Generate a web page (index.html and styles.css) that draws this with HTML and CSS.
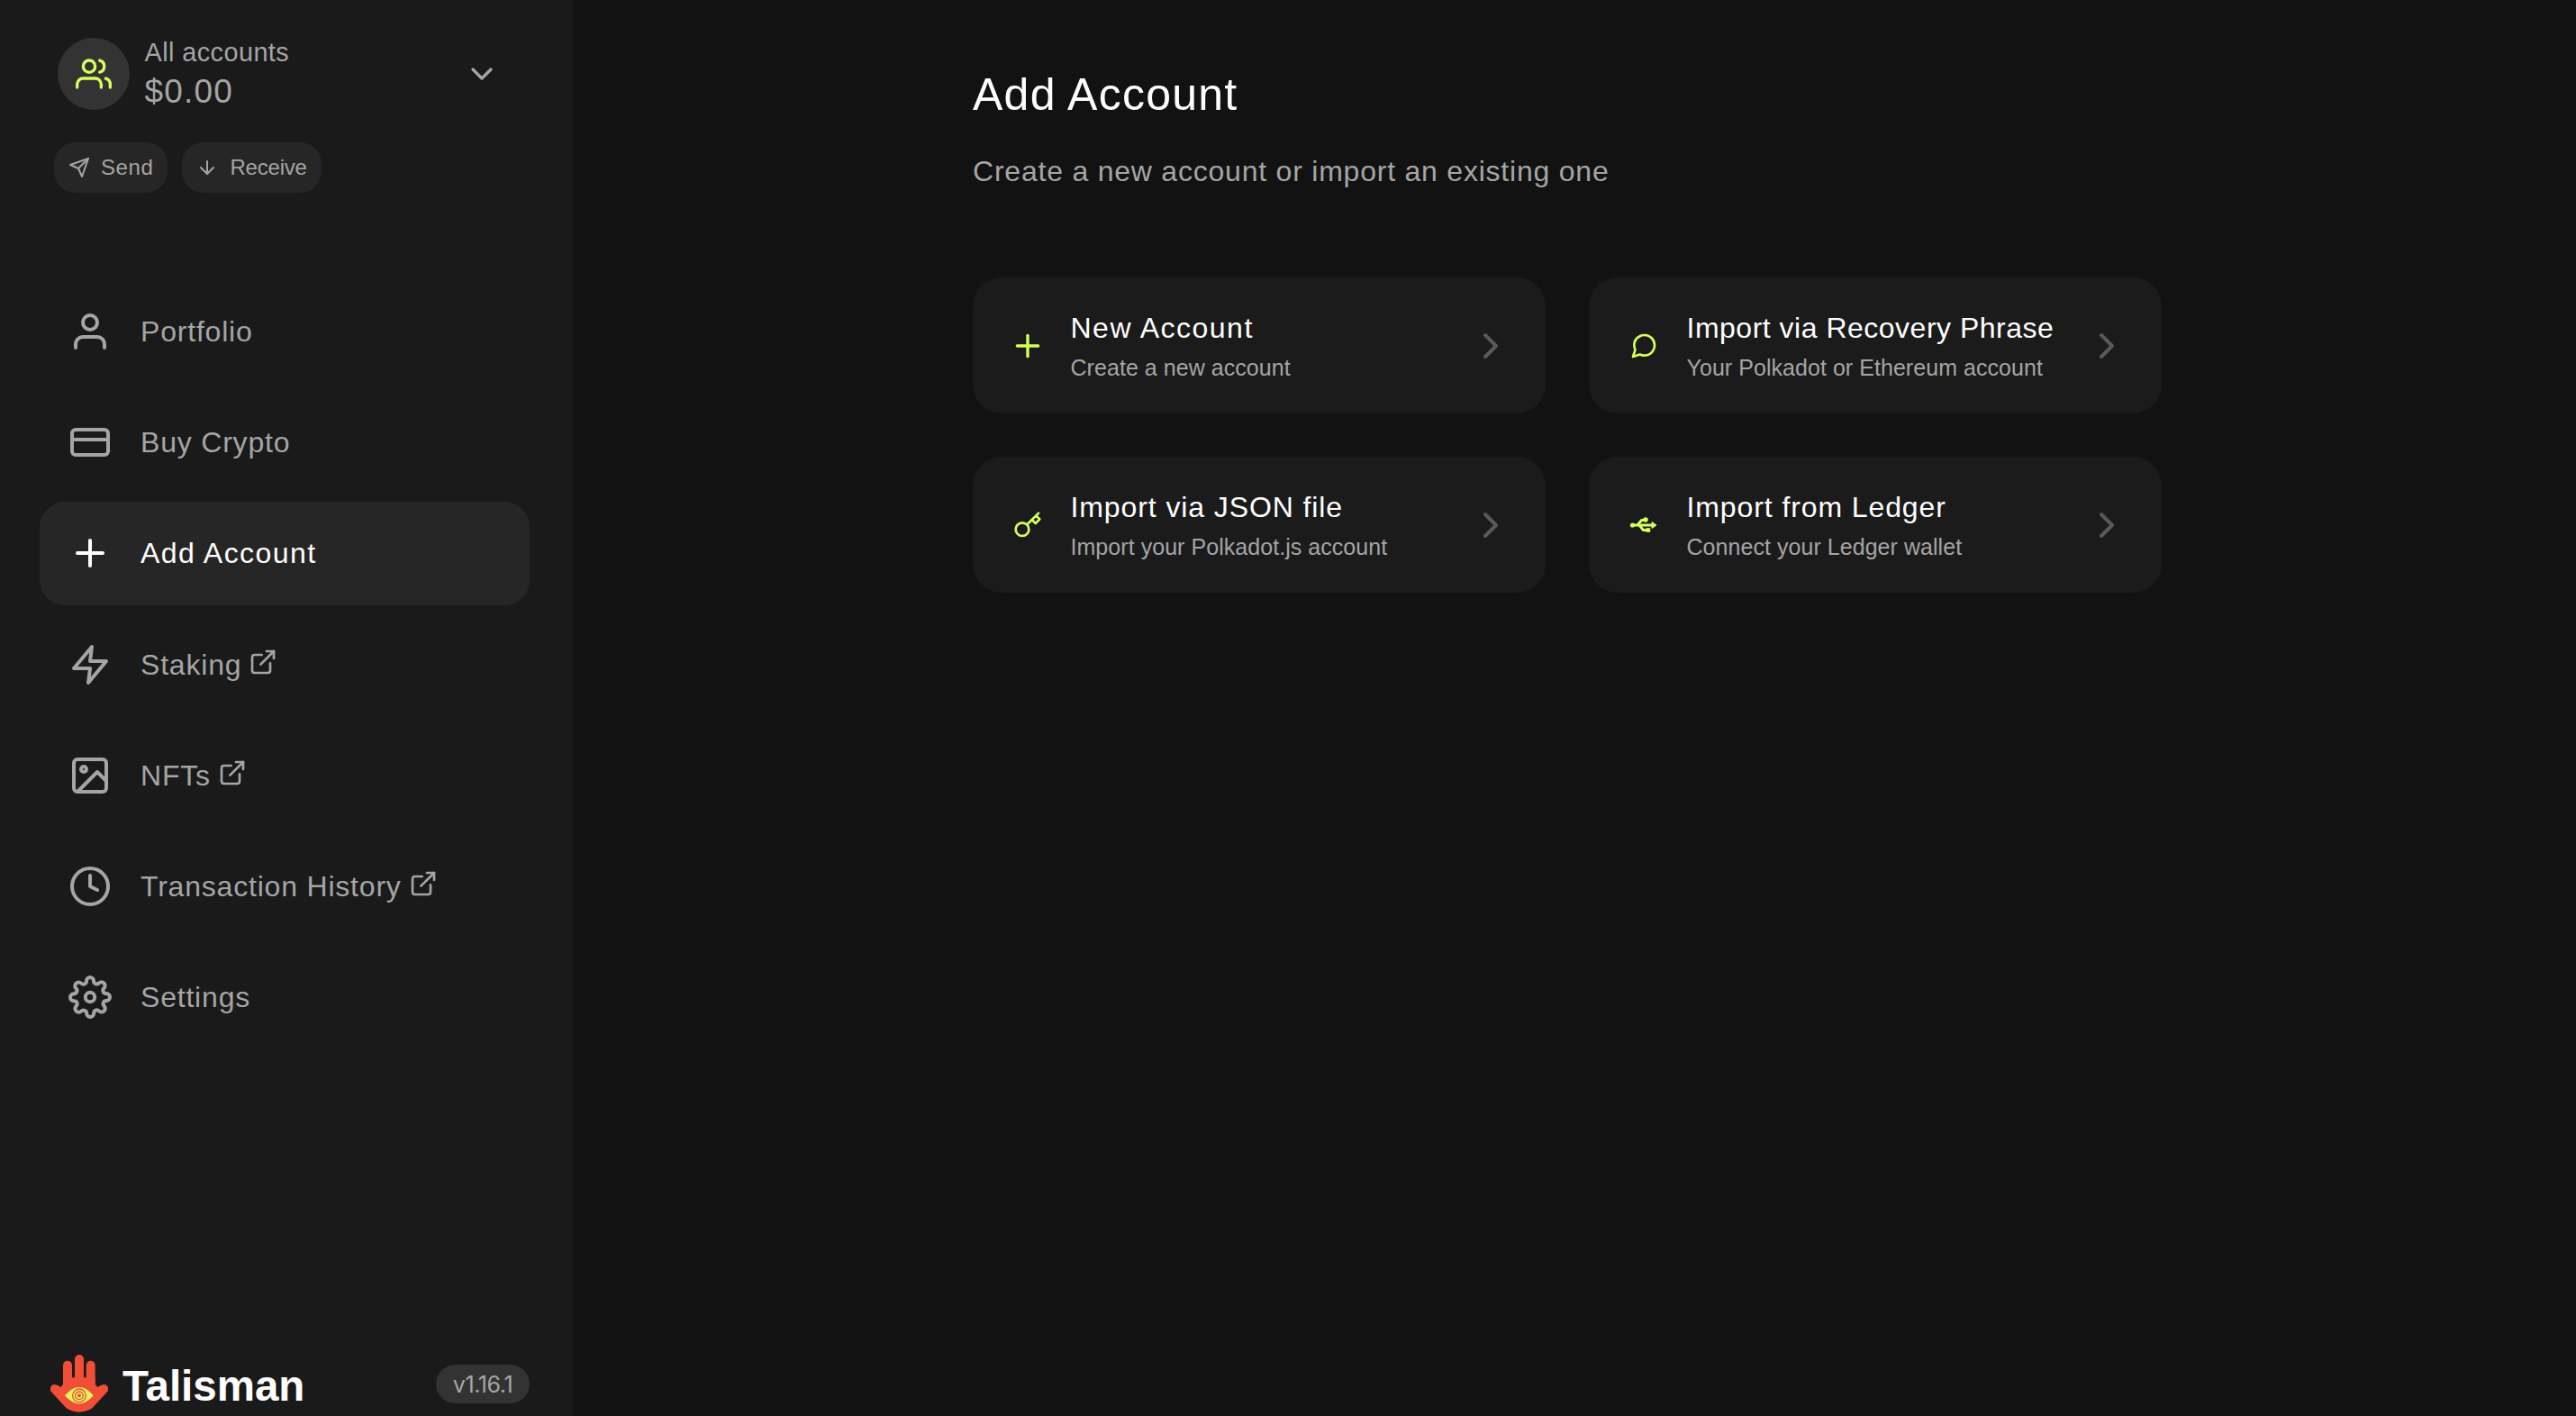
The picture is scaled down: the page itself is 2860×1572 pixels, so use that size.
FILE: index.html
```html
<!DOCTYPE html>
<html lang="en">
<head>
<meta charset="utf-8">
<title>Add Account</title>
<link rel="stylesheet" href="styles.css">
</head>
<body>
<div class="app">
  <aside class="sidebar">
    <div class="account-block">
      <div class="account-row">
        <div class="avatar"><svg class="ico i40" viewBox="0 0 24 24"><path d="M17 21v-2a4 4 0 0 0-4-4H5a4 4 0 0 0-4 4v2"/><circle cx="9" cy="7" r="4"/><path d="M23 21v-2a4 4 0 0 0-3-3.87"/><path d="M16 3.13a4 4 0 0 1 0 7.75"/></svg></div>
        <div class="account-text">
          <div class="account-name">All accounts</div>
          <div class="account-total">$0.00</div>
        </div>
        <svg class="ico i40 account-chevron" viewBox="0 0 24 24"><polyline points="6 9 12 15 18 9"/></svg>
      </div>
      <div class="quick-actions">
        <div class="pill pill-send"><svg class="ico i24" viewBox="0 0 24 24"><line x1="22" y1="2" x2="11" y2="13"/><polygon points="22 2 15 22 11 13 2 9 22 2"/></svg><span>Send</span></div>
        <div class="pill pill-receive"><svg class="ico i24" viewBox="0 0 24 24"><line x1="12" y1="5" x2="12" y2="19"/><polyline points="19 12 12 19 5 12"/></svg><span>Receive</span></div>
      </div>
    </div>
    <nav class="nav">
      <div class="nav-item"><svg class="ico i48" viewBox="0 0 24 24"><path d="M20 21v-2a4 4 0 0 0-4-4H8a4 4 0 0 0-4 4v2"/><circle cx="12" cy="7" r="4"/></svg><span>Portfolio</span></div>
      <div class="nav-item"><svg class="ico i48" viewBox="0 0 24 24"><rect x="2" y="5" width="20" height="14" rx="2"/><line x1="2" y1="10.5" x2="22" y2="10.5"/></svg><span>Buy Crypto</span></div>
      <div class="nav-item active"><svg class="ico i48" viewBox="0 0 24 24"><line x1="12" y1="5" x2="12" y2="19"/><line x1="5" y1="12" x2="19" y2="12"/></svg><span>Add Account</span></div>
      <div class="nav-item"><svg class="ico i48" viewBox="0 0 24 24"><polygon points="13 2 3 14 12 14 11 22 21 10 12 10 13 2"/></svg><span>Staking</span><svg class="ico i32 ext" viewBox="0 0 24 24"><path d="M18 13v6a2 2 0 0 1-2 2H5a2 2 0 0 1-2-2V8a2 2 0 0 1 2-2h6"/><polyline points="15 3 21 3 21 9"/><line x1="10" y1="14" x2="21" y2="3"/></svg></div>
      <div class="nav-item"><svg class="ico i48" viewBox="0 0 24 24"><rect x="3" y="3" width="18" height="18" rx="2"/><circle cx="8.5" cy="8.5" r="1.5"/><polyline points="21 15 16 10 5 21"/></svg><span>NFTs</span><svg class="ico i32 ext" viewBox="0 0 24 24"><path d="M18 13v6a2 2 0 0 1-2 2H5a2 2 0 0 1-2-2V8a2 2 0 0 1 2-2h6"/><polyline points="15 3 21 3 21 9"/><line x1="10" y1="14" x2="21" y2="3"/></svg></div>
      <div class="nav-item"><svg class="ico i48" viewBox="0 0 24 24"><circle cx="12" cy="12" r="10"/><polyline points="12 6 12 12 16 14"/></svg><span>Transaction History</span><svg class="ico i32 ext" viewBox="0 0 24 24"><path d="M18 13v6a2 2 0 0 1-2 2H5a2 2 0 0 1-2-2V8a2 2 0 0 1 2-2h6"/><polyline points="15 3 21 3 21 9"/><line x1="10" y1="14" x2="21" y2="3"/></svg></div>
      <div class="nav-item"><svg class="ico i48" viewBox="0 0 24 24"><circle cx="12" cy="12" r="2.6"/><path d="M19.4 15a1.65 1.65 0 0 0 .33 1.82l.06.06a2 2 0 0 1 0 2.83 2 2 0 0 1-2.83 0l-.06-.06a1.65 1.65 0 0 0-1.82-.33 1.65 1.65 0 0 0-1 1.51V21a2 2 0 0 1-2 2 2 2 0 0 1-2-2v-.09A1.65 1.65 0 0 0 9 19.4a1.65 1.65 0 0 0-1.82.33l-.06.06a2 2 0 0 1-2.83 0 2 2 0 0 1 0-2.83l.06-.06a1.65 1.65 0 0 0 .33-1.82 1.65 1.65 0 0 0-1.51-1H3a2 2 0 0 1-2-2 2 2 0 0 1 2-2h.09A1.65 1.65 0 0 0 4.6 9a1.65 1.65 0 0 0-.33-1.82l-.06-.06a2 2 0 0 1 0-2.83 2 2 0 0 1 2.83 0l.06.06a1.65 1.65 0 0 0 1.82.33H9a1.65 1.65 0 0 0 1-1.51V3a2 2 0 0 1 2-2 2 2 0 0 1 2 2v.09a1.65 1.65 0 0 0 1 1.51 1.65 1.65 0 0 0 1.82-.33l.06-.06a2 2 0 0 1 2.83 0 2 2 0 0 1 0 2.83l-.06.06a1.65 1.65 0 0 0-.33 1.82V9a1.65 1.65 0 0 0 1.51 1H21a2 2 0 0 1 2 2 2 2 0 0 1-2 2h-.09a1.65 1.65 0 0 0-1.51 1z"/></svg><span>Settings</span></div>
    </nav>
    <footer class="brand-row">
      <div class="brand">
        <svg class="hand" viewBox="48 42 192 192">
          <g class="hand-fingers"><line x1="105" y1="77" x2="105" y2="150"/><line x1="144" y1="57" x2="144" y2="150"/><line x1="182" y1="77" x2="182" y2="150"/></g>
          <path class="hand-palm" d="M90 118 L197 118 L197 140 L205 150 Q215 142 226 141 A15 15 0 0 1 237 166 L187 220 Q166 233 144 233 Q122 233 101 220 L51 166 A15 15 0 0 1 62 141 Q73 142 83 150 L90 140 Z"/>
          <path class="hand-eye" d="M96 178 Q120 150 144 150 Q168 150 191 178 Q168 205 144 205 Q120 205 96 178 Z"/>
          <circle class="hand-ring" cx="144" cy="178" r="22"/>
          <circle class="hand-ring" cx="144" cy="178" r="13"/>
          <circle class="hand-dot" cx="144" cy="178" r="6"/>
        </svg>
        <span class="brand-name">Talisman</span>
      </div>
      <span class="version">v1.16.1</span>
    </footer>
  </aside>
  <main class="main">
    <h1 class="title">Add Account</h1>
    <p class="subtitle">Create a new account or import an existing one</p>
    <div class="cards">
      <div class="card">
        <div class="card-icon"><svg class="ico i40" viewBox="0 0 24 24"><line x1="12" y1="5" x2="12" y2="19"/><line x1="5" y1="12" x2="19" y2="12"/></svg></div>
        <div class="card-text"><div class="card-title wide">New Account</div><div class="card-sub">Create a new account</div></div>
        <svg class="ico i48 card-arrow" viewBox="0 0 24 24"><polyline points="9 18 15 12 9 6"/></svg>
      </div>
      <div class="card">
        <div class="card-icon"><svg class="ico i32" viewBox="0 0 24 24"><path d="M21 11.5a8.38 8.38 0 0 1-.9 3.8 8.5 8.5 0 0 1-7.6 4.7 8.38 8.38 0 0 1-3.8-.9L3 21l1.9-5.7a8.38 8.38 0 0 1-.9-3.8 8.5 8.5 0 0 1 4.7-7.6 8.38 8.38 0 0 1 3.8-.9h.5a8.48 8.48 0 0 1 8 8v.5z"/></svg></div>
        <div class="card-text"><div class="card-title tight">Import via Recovery Phrase</div><div class="card-sub">Your Polkadot or Ethereum account</div></div>
        <svg class="ico i48 card-arrow" viewBox="0 0 24 24"><polyline points="9 18 15 12 9 6"/></svg>
      </div>
      <div class="card">
        <div class="card-icon"><svg class="ico i32" viewBox="0 0 24 24"><path d="M21 2l-2 2m-7.61 7.61a5.5 5.5 0 1 1-7.78 7.78 5.5 5.5 0 0 1 7.78-7.78zm0 0L15.5 7.5m0 0l3 3L22 7l-3-3m-3.5 3.5L19 4"/></svg></div>
        <div class="card-text"><div class="card-title">Import via JSON file</div><div class="card-sub">Import your Polkadot.js account</div></div>
        <svg class="ico i48 card-arrow" viewBox="0 0 24 24"><polyline points="9 18 15 12 9 6"/></svg>
      </div>
      <div class="card">
        <div class="card-icon"><svg class="usb" viewBox="0 0 32 32"><path d="M3 16H28"/><path d="M25 12.5L30 16L25 19.5Z"/><path d="M9 16L13.5 10.5H18"/><path d="M11 16L15.5 21.5H20"/><circle cx="3.5" cy="16" r="2.6"/><circle cx="18" cy="10" r="2.8"/><rect x="18.6" y="19.2" width="4.6" height="4.6"/></svg></div>
        <div class="card-text"><div class="card-title">Import from Ledger</div><div class="card-sub">Connect your Ledger wallet</div></div>
        <svg class="ico i48 card-arrow" viewBox="0 0 24 24"><polyline points="9 18 15 12 9 6"/></svg>
      </div>
    </div>
  </main>
</div>
</body>
</html>
```

FILE: styles.css
```css
* { box-sizing: border-box; }
html, body { margin: 0; padding: 0; height: 100%; }
body { background: #121212; color: #a5a5a5; font-family: "Liberation Sans", Arial, sans-serif; overflow: hidden; }

.app { display: flex; height: 1572px; }

.ico { fill: none; stroke: currentColor; stroke-width: 2; stroke-linecap: round; stroke-linejoin: round; flex: none; display: block; }
.i24 { width: 24px; height: 24px; }
.i32 { width: 32px; height: 32px; }
.i40 { width: 40px; height: 40px; }
.i48 { width: 48px; height: 48px; }

.sidebar { width: 636px; flex: none; background: #1a1a1a; display: flex; flex-direction: column; padding: 42px 48px 4px 44px; }

.account-block { padding-left: 16px; }
.account-row { display: flex; align-items: center; width: 495px; height: 80px; padding-left: 4px; }
.avatar { width: 80px; height: 80px; border-radius: 50%; background: #333; color: #d5ff5c; display: flex; align-items: center; justify-content: center; flex: none; }
.account-text { margin-left: 16.5px; flex: 1; margin-top: -4px; }
.account-name { font-size: 28.8px; line-height: 44px; letter-spacing: 0.45px; color: #a5a5a5; }
.account-total { font-size: 37px; line-height: 44px; letter-spacing: 1.2px; color: #a5a5a5; }
.account-chevron { color: #a5a5a5; }

.quick-actions { display: flex; gap: 16px; margin-top: 36px; }
.pill { height: 56px; border-radius: 24px; background: #262626; display: flex; align-items: center; padding: 0 16px; gap: 12px; font-size: 24px; color: #a5a5a5; }
.pill-send { letter-spacing: 0.6px; }
.pill-receive { letter-spacing: -0.2px; }
.pill-receive span { margin-left: 1px; }

.nav { display: flex; flex-direction: column; gap: 8px; margin-top: 96.5px; }
.nav-item { height: 115.2px; display: flex; align-items: center; border-radius: 28px; padding-left: 32px; font-size: 32px; letter-spacing: 0.8px; color: #a5a5a5; }
.nav-item > span { margin-left: 32px; margin-top: 1px; }
.nav-item.active { background: #262626; color: #fff; letter-spacing: 1.45px; }
.ext { margin: -6px 0 0 8px; }

.brand-row { margin-top: auto; display: flex; align-items: center; justify-content: space-between; padding-left: 12px; }
.brand { display: flex; align-items: center; gap: 16px; }
.hand { width: 64px; height: 64px; flex: none; display: block; }
.hand-fingers line { stroke: #f04f36; stroke-width: 30; stroke-linecap: round; }
.hand-palm { fill: #f04f36; }
.hand-eye { fill: #e3f25f; }
.hand-ring { fill: none; stroke: #f04f36; stroke-width: 4; }
.hand-dot { fill: #f04f36; }
.brand-name { font-size: 47.5px; font-weight: 700; color: #fff; line-height: 56px; margin-top: 6px; }
.version { height: 43px; width: 104px; border-radius: 22px; background: #333; display: flex; align-items: center; justify-content: center; font-family: Inter, sans-serif; font-size: 25px; letter-spacing: -0.4px; color: #a5a5a5; margin-top: 1px; }

.main { flex: 1; padding: 75px 0 0 444px; }
.title { margin: 0; font-size: 50px; font-weight: 400; line-height: 60px; letter-spacing: 1.25px; color: #fff; }
.subtitle { margin: 33px 0 0; font-size: 32px; line-height: 44px; letter-spacing: 0.78px; color: #a5a5a5; }

.cards { display: grid; grid-template-columns: 636px 636px; gap: 48px; margin-top: 96px; }
.card { height: 151px; border-radius: 32px; background: #1b1b1b; display: flex; align-items: center; padding: 0 37px 0 41px; }
.card-icon { width: 40px; height: 40px; flex: none; display: flex; align-items: center; justify-content: center; color: #d5ff5c; }
.card-text { flex: 1; margin-left: 27.5px; margin-top: 4px; }
.card-title { font-size: 32px; line-height: 44px; letter-spacing: 0.9px; color: #fff; }
.card-title.wide { letter-spacing: 1.5px; }
.card-title.tight { letter-spacing: 0.5px; }
.card-sub { font-size: 25px; line-height: 44px; letter-spacing: 0.05px; color: #a5a5a5; }
.card-arrow { color: #5a5a5a; }

.usb { width: 32px; height: 32px; display: block; fill: none; stroke: #d5ff5c; stroke-width: 3; stroke-linejoin: round; }
.usb circle, .usb rect { fill: #d5ff5c; stroke: none; }
.usb path:nth-child(2) { fill: #d5ff5c; stroke-width: 1; }
```
